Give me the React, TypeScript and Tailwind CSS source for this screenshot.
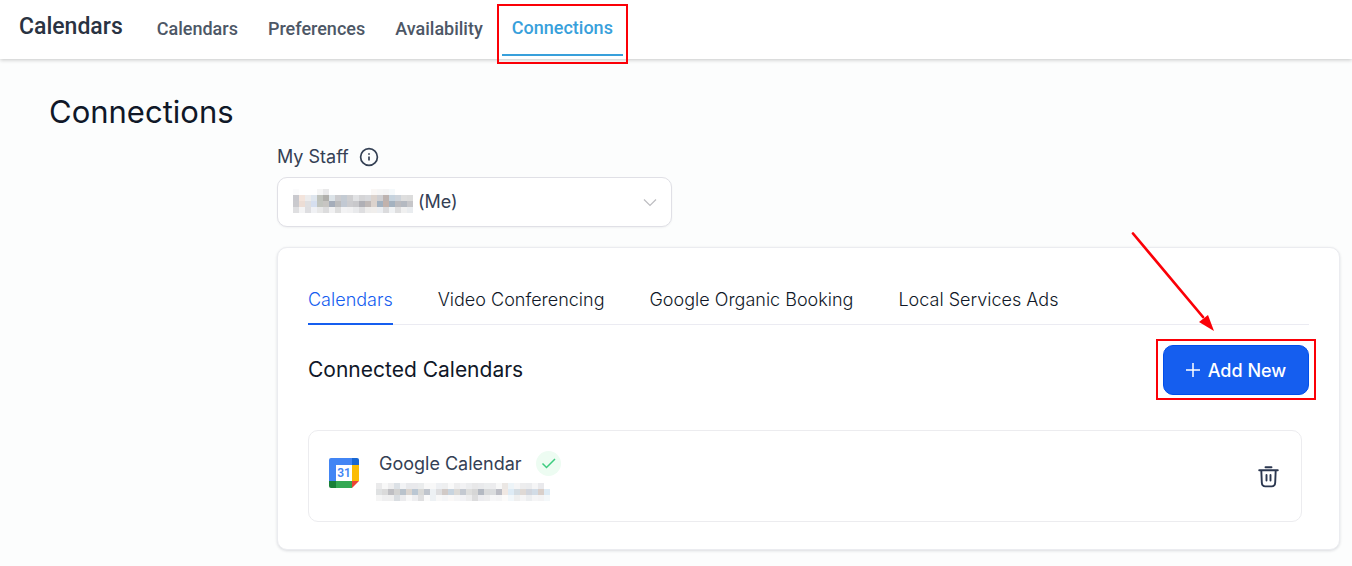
import React from "react";

const NAME_CELLS = [
  ["#fbfbfc", "#ffffff", "#ffffff", "#ffffff", "#f5f5f5", "#e9e9ea", "#ffffff", "#ffffff", "#ffffff", "#ffffff", "#ffffff", "#ffffff", "#ffffff", "#faf7f5", "#f6f6f6", "#f4f4f5", "#f5f9fb", "#ffffff", "#ffffff", "#ffffff"],
  ["#c9c9ce", "#f3e4dc", "#ececed", "#dfe6ee", "#c0c3bd", "#b0afab", "#dce3e8", "#cccccf", "#c4cbd3", "#cfcfd1", "#e1e2e4", "#d5d5d7", "#d8d9dc", "#dcd3cd", "#cfcfd2", "#bdb3b0", "#c6d3de", "#ced4db", "#dedede", "#dcdcdc"],
  ["#cacace", "#ecddd5", "#dfdfe1", "#d6dfef", "#c2c5bf", "#c7c5c2", "#a5adba", "#bcbcbd", "#c2c9d3", "#cccccf", "#c8c8cb", "#b0b0b6", "#c0b9b7", "#dcd3cd", "#a3b2c1", "#c2b2ac", "#a4b2c0", "#bbbbbf", "#b4b9c1", "#c6c6c9"],
  ["#dfdfe1", "#f4f4f5", "#dedee1", "#f0f1f4", "#e8e8e8", "#dcdcdd", "#f1f1f2", "#dedede", "#f3f3f4", "#f1f1f2", "#e9eaec", "#dedee0", "#eeedec", "#f0eeec", "#eceef1", "#dbdbdd", "#f0f2f4", "#dededf", "#f0f0f0", "#e9ecef"],
];

const MAIL_CELLS = [
  ["#eaeaeb", "#f8f8f8", "#eeeeef", "#dce1e6", "#f2f3f5", "#e8e9ec", "#e9e9ec", "#eaeced", "#f8f8f8", "#f8f8f8", "#eef0f3", "#eeeff0", "#f9f9f9", "#eeeeef", "#f2f2f4", "#ecedef", "#e8e8e9", "#e9eaec", "#eceeef", "#ececee", "#f8f8f8", "#ebe7e4", "#edf4f8", "#f5f5f6", "#ededee", "#ebecee", "#f5f5f6", "#e9e9ec", "#ffffff"],
  ["#dfe1e2", "#dadada", "#bfbfc3", "#d2d2d1", "#bac3cc", "#dbd5d0", "#bbc7d3", "#d9d9d7", "#c0c5cd", "#edf1f4", "#dedee0", "#d1cac7", "#c8d4df", "#dcdad7", "#c4c9d1", "#dededd", "#d6d6d6", "#b4b9c2", "#d9dadb", "#dadcde", "#bcbdc5", "#f0e8e3", "#deebf5", "#d5dde3", "#dfd9d5", "#d1d5dd", "#d2dce6", "#d9cfca", "#deebf5"],
  ["#f5f5f5", "#efeff0", "#efefef", "#d9dde1", "#ebebed", "#f8f8f8", "#eeeef0", "#dfdfe0", "#fafafa", "#edf1f4", "#f8f8f8", "#f4f5f7", "#faf8f7", "#f5f5f6", "#f2f2f5", "#ededee", "#dcdcdd", "#ececef", "#eeeeef", "#f7f7f8", "#f5f5f6", "#fcfbfa", "#f2f7fa", "#efefef", "#f5f5f6", "#eceef0", "#f5f5f6", "#f3f3f4", "#f4f8fa"],
];

function Mosaic({ cells }: { cells: string[][] }) {
  return (
    <svg width={cells[0].length * 6} height={cells.length * 6} shapeRendering="crispEdges" aria-hidden="true">
      {cells.map((row, y) =>
        row.map((fill, x) => <rect key={`${x}-${y}`} x={x * 6} y={y * 6} width="6" height="6" fill={fill} />),
      )}
    </svg>
  );
}

function GoogleCalendarIcon() {
  return (
    <svg width="30" height="30" viewBox="0 0 30 30" className="shrink-0" aria-hidden="true">
      <path d="M2 0H23V7H7V23H0V2A2 2 0 0 1 2 0Z" fill="#4285f4" />
      <path d="M23 0H28A2 2 0 0 1 30 2V7H23Z" fill="#1967d2" />
      <path d="M23 7H30V23H23Z" fill="#fbbc04" />
      <path d="M7 23H23V30H7Z" fill="#34a853" />
      <path d="M0 23H7V30H2A2 2 0 0 1 0 28Z" fill="#188038" />
      <path d="M23 23H30L23 30Z" fill="#ea4335" />
      <path d="M7 7H23V23H7Z" fill="#fff" />
      <text x="15" y="19" textAnchor="middle" fontFamily="Roboto, sans-serif" fontSize="12" fontWeight="600" fill="#4285f4">
        31
      </text>
    </svg>
  );
}

function InfoIcon() {
  return (
    <svg width="20" height="20" viewBox="0 0 20 20" fill="none" stroke="#344054" strokeWidth="1.7" aria-hidden="true">
      <circle cx="10" cy="10" r="8.4" />
      <path d="M10 9.5V13.5M10 6.2V7.8" />
    </svg>
  );
}

function TrashIcon() {
  return (
    <svg width="21" height="22" viewBox="0 0 21 22" fill="none" stroke="#2b3750" strokeWidth="1.9" strokeLinecap="round" strokeLinejoin="round" aria-hidden="true">
      <path d="M7.5 1.2H13.5M1.2 4.2H19.8M3.3 4.2L3.8 16.5Q4 20.4 7.3 20.4H13.7Q17 20.4 17.2 16.5L17.7 4.2M8.5 9V14.5M12.5 9V14.5" />
    </svg>
  );
}

const navItems = ["Calendars", "Preferences", "Availability"];
const tabs = ["Video Conferencing", "Google Organic Booking", "Local Services Ads"];

export default function App() {
  return (
    <div className="min-h-screen bg-[#fcfdfd] pb-4 font-['Inter',sans-serif] text-[#101828]">
      <header className="flex h-[59px] items-start bg-white pl-[19px] font-['Roboto',sans-serif] font-medium shadow-[0_1px_4px_rgba(0,0,0,0.22)]">
        <div className="pt-[11px] text-[23px] leading-8 text-[#2a3342]">Calendars</div>
        <nav className="flex pl-[34px] text-lg leading-6 text-[#4d5766]">
          {navItems.map((item) => (
            <a key={item} href="#" className="mr-[30px] pt-[17px]">
              {item}
            </a>
          ))}
          <a href="#" aria-current="page" className="relative -ml-[11px] h-14 border-b-2 border-[#38a0db] px-2.5 pt-4 text-[#38a0db]">
            Connections
            <span className="absolute top-1 -right-[5px] -bottom-[10px] -left-[5px] border-2 border-[#fb0007]" />
          </a>
        </nav>
      </header>

      <main className="pr-3">
        <h1 className="pt-[33px] pl-[49px] text-[31px] leading-10">Connections</h1>

        <div className="pl-[277px]">
          <div className="flex items-center gap-2.5 pt-[13px] text-lg leading-6 text-[#344054]">
            <label htmlFor="staff">My Staff</label>
            <InfoIcon />
          </div>

          <div className="relative mt-2 h-[50px] w-[395px] max-w-full">
            <select
              id="staff"
              className="size-full appearance-none rounded-[10px] border border-[#e0e0e6] bg-white pr-10 pl-[140px] text-lg text-[#344054] shadow-[0_1px_2px_rgba(16,24,40,0.05)]"
            >
              <option>(Me)</option>
            </select>
            <span className="pointer-events-none absolute top-3 left-4">
              <Mosaic cells={NAME_CELLS} />
            </span>
            <svg className="pointer-events-none absolute top-[21px] right-[15px]" width="14" height="9" viewBox="0 0 14 9" fill="none" stroke="#bdbdc1" strokeWidth="1.2" aria-hidden="true">
              <path d="M1 1.5L7 7.5L13 1.5" />
            </svg>
          </div>

          <section className="mt-5 rounded-[10px] border border-[#ebecf0] bg-white px-[30px] pb-[27px] shadow-[0_1px_3px_rgba(16,24,40,0.14)]">
            <div role="tablist" className="flex gap-[45px] border-b border-[#ebebf2] pt-8 text-lg leading-10 font-light">
              <button type="button" role="tab" aria-selected="true" className="-mb-px border-b-2 border-[#155eef] pb-[3px] text-[#155eef]">
                Calendars
              </button>
              {tabs.map((tab) => (
                <button key={tab} type="button" role="tab" aria-selected="false" className="pb-1">
                  {tab}
                </button>
              ))}
            </div>

            <div className="flex items-center justify-between pt-5">
              <h2 className="text-[21px] leading-8">Connected Calendars</h2>
              <div className="relative">
                <button type="button" className="flex h-[50px] w-[146px] items-center justify-center gap-2 rounded-[10px] border border-[#004eeb] bg-[#155eef] pt-0.5 text-lg font-medium text-white">
                  <svg width="14" height="14" viewBox="0 0 14 14" stroke="currentColor" strokeWidth="1.5" className="mb-0.5" aria-hidden="true">
                    <path d="M7 0V14M0 7H14" />
                  </svg>
                  Add New
                </button>
                <span className="pointer-events-none absolute -top-1.5 -right-[7px] -bottom-[5px] -left-[7px] border-2 border-[#fb0007]" />
                <svg className="pointer-events-none absolute right-[93px] bottom-[62px]" width="86" height="102" viewBox="0 0 86 102" aria-hidden="true">
                  <path d="M3 2.5L73 86" stroke="#fb0007" strokeWidth="2.7" strokeLinecap="round" />
                  <path d="M84 100L69 91L78 84Z" fill="#fb0007" />
                </svg>
              </div>
            </div>

            <div className="mt-[35px] mr-[7px] flex h-[92px] items-center rounded-[10px] border border-[#ececef] px-5">
              <div className="pb-1.5">
                <GoogleCalendarIcon />
              </div>
              <div className="ml-[17px]">
                <div className="flex h-6 items-center gap-3.5 text-lg leading-6 text-[#344054]">
                  <span className="pl-[3px]">Google Calendar</span>
                  <svg width="25" height="25" viewBox="0 0 25 25" aria-hidden="true">
                    <circle cx="12.5" cy="12.5" r="12.5" fill="#edfcf2" />
                    <path d="M6.5 12.5L10.5 16.5L19 8" fill="none" stroke="#3ccb7f" strokeWidth="1.5" />
                  </svg>
                </div>
                <div className="pt-[7px]">
                  <Mosaic cells={MAIL_CELLS} />
                </div>
              </div>
              <button type="button" aria-label="Delete" className="mr-0.5 ml-auto pt-0.5">
                <TrashIcon />
              </button>
            </div>
          </section>
        </div>
      </main>
    </div>
  );
}
